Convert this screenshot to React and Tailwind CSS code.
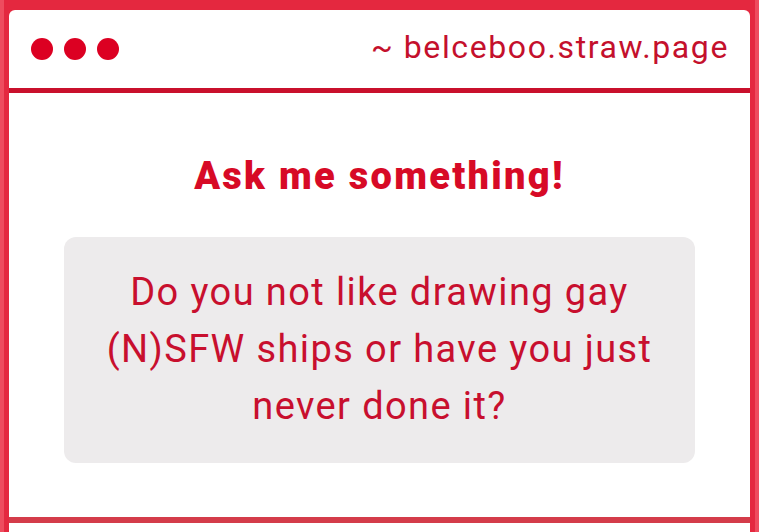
export default function App() {
  const font = { fontFamily: "Roboto, 'Noto Sans', sans-serif" };
  return (
    <div
      className="h-[532px] w-[759px] overflow-hidden bg-[#e4283f] border-x-4 border-[#ee4c5e] px-[5px] pt-[10px]"
      style={font}
    >
      <div className="bg-white rounded-t-[6px] h-full">
        <header className="h-[83px] flex items-center justify-between pl-[22px] pr-[21px] border-b-[5px] border-[#c9102c]">
          <div className="flex gap-[11px]">
            <span className="w-[22px] h-[22px] rounded-full bg-[#dc0022]" />
            <span className="w-[22px] h-[22px] rounded-full bg-[#dc0022]" />
            <span className="w-[22px] h-[22px] rounded-full bg-[#dc0022]" />
          </div>
          <p className="text-[32px] leading-none tracking-[1.6px] text-[#c4102c] pb-[4px]">~ belceboo.straw.page</p>
        </header>

        <section className="pt-[62px] pb-[54px] px-[55px] border-b-[6px] border-[#d43c4a]">
          <h1 className="text-center text-[38px] leading-[42px] font-black tracking-[2.3px] text-[#d70a26]">
            Ask me something!
          </h1>
          <div className="mt-[40px] bg-[#edebec] rounded-[12px] pt-[27px] pb-[28px] px-4 text-center text-[38px] leading-[57px] tracking-[1.4px] text-[#c80f2e]">
            <p>Do you not like drawing gay</p>
            <p>(N)SFW ships or have you just</p>
            <p>never done it?</p>
          </div>
        </section>
      </div>
    </div>
  );
}
